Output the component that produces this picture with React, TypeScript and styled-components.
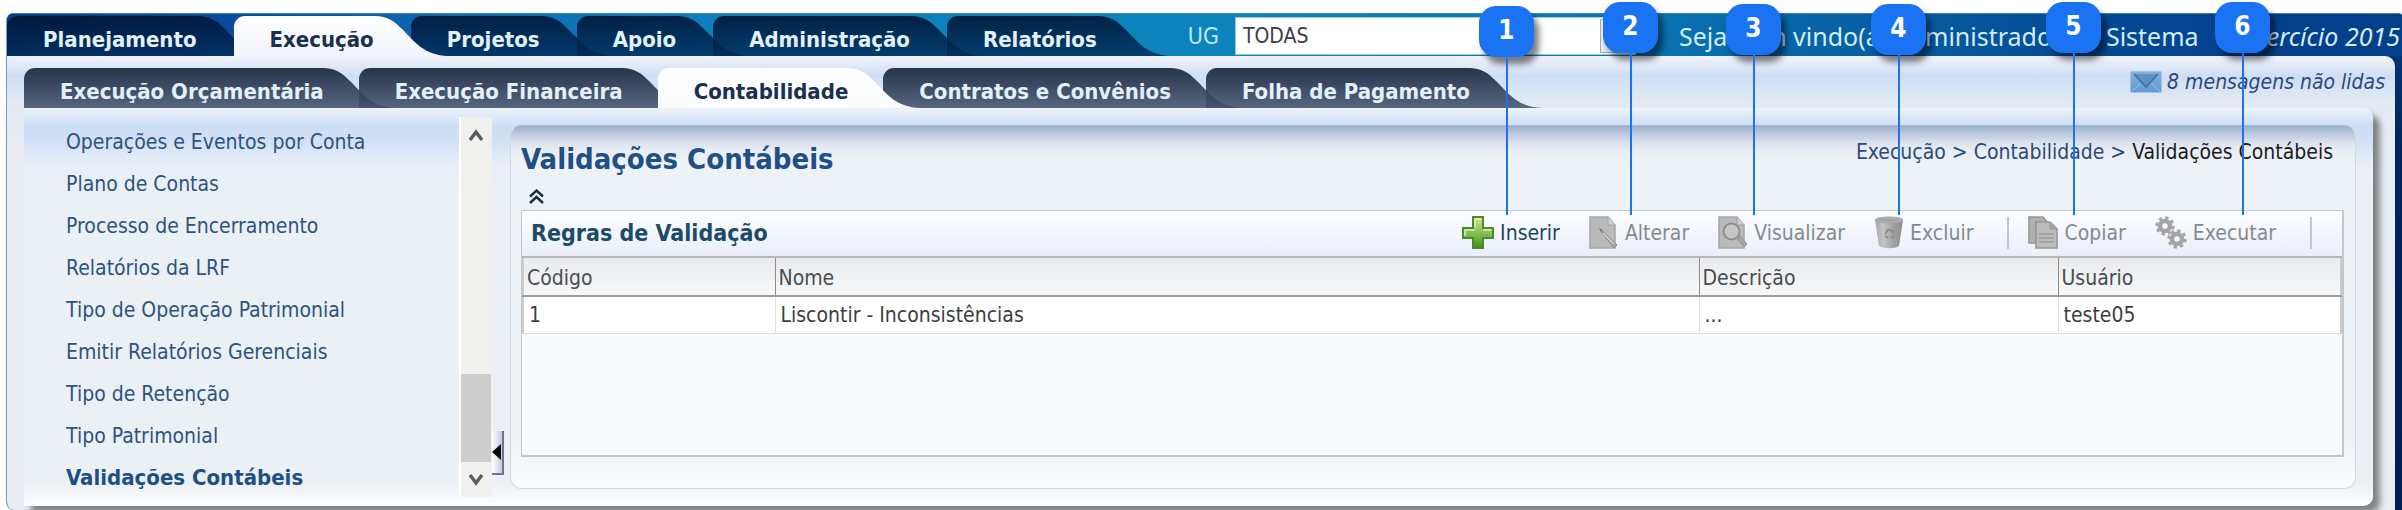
import React from "react";
import styled, { createGlobalStyle, css } from "styled-components";

const GlobalStyle = createGlobalStyle`
  *, *::before, *::after { box-sizing: border-box; }
  body {
    margin: 0;
    background: #fff;
    font-family: "DejaVu Sans Condensed", "Noto Sans", sans-serif;
    font-size: 21px;
    line-height: 30px;
    color: #3c3f45;
    overflow-x: hidden;
  }
  a { color: inherit; text-decoration: none; }
  ul, ol, h1, h2 { margin: 0; padding: 0; list-style: none; }
  button, select { font: inherit; color: inherit; border: 0; background: none; padding: 0; margin: 0; }
`;

/* ---------- frame ---------- */

const Page = styled.div`
  position: relative;
  padding: 13px 0 0 6px;
`;

const Frame = styled.div`
  border-left: 1px solid #6d9bd0;
  border-radius: 8px 4px 0 8px;
  overflow: hidden;
  background: linear-gradient(180deg, #023a80 0, #00265c 130px, #001f54 100%);
`;

const Header = styled.header`
  display: flex;
  align-items: flex-end;
  height: 43px;
  border-top: 1px solid #3f7fb4;
  background: linear-gradient(90deg, #073a86 0%, #0a4a9c 9%, #0c68b0 18%, #0d80c0 30%, #0b84bd 50%, #0a78b4 66%, #0763a6 76%, #05509a 84%, #043f8c 94%, #03408a 100%);
`;

const Body = styled.div`
  margin-right: 7px;
  border-radius: 0 10px 0 0;
  background: linear-gradient(180deg, #f1f4fc 0, #e3ebf8 8px, #cfdef4 20px, #dce6f4 38px, #e6ecf5 56px, #e9eef4 110px);
  padding-bottom: 4px;
`;

/* ---------- tabs ---------- */

const TabList = styled.ul`
  display: flex;
  height: 40px;
  font-weight: 700;
  font-size: 22px;
`;

const TabItem = styled.li<{ $active?: boolean; $kind: "main" | "sub" }>`
  position: relative;
  isolation: isolate;
  z-index: ${p => (p.$active ? 1 : 0)};
  padding: 9px ${p => (p.$kind === "main" ? 37 : 35)}px 0 36px;
  white-space: nowrap;
  color: ${p => (p.$active ? "#1b2f50" : "#e2f0f7")};
`;

type Look = { top: string; bottom: string };

const TabBody = styled.span<{ $look: Look }>`
  position: absolute;
  inset: 0 36px 0 0;
  z-index: -1;
  border-radius: 11px 0 0 0;
  background: linear-gradient(180deg, ${p => p.$look.top}, ${p => p.$look.bottom});
`;

const TabSlope = styled.svg`
  position: absolute;
  top: 0;
  right: -37px;
  width: 73px;
  height: 40px;
  z-index: -1;
`;

const looks: Record<string, Look> = {
  main: { top: "rgba(0,20,52,0.88)", bottom: "rgba(0,42,86,0.78)" },
  mainActive: { top: "#ffffff", bottom: "#f1f4fc" },
  sub: { top: "rgba(33,48,70,0.97)", bottom: "rgba(64,80,108,0.86)" },
  subActive: { top: "#ffffff", bottom: "#fbfcff" },
};

function Tab({ label, active, kind }: { label: string; active?: boolean; kind: "main" | "sub" }) {
  const key = active ? kind + "Active" : kind;
  const look = looks[key];
  return (
    <TabItem $active={active} $kind={kind}>
      <TabBody $look={look} />
      <TabSlope viewBox="0 0 73 40" aria-hidden="true">
        <defs>
          <linearGradient id={"slope-" + key} x1="0" y1="0" x2="0" y2="1">
            <stop offset="0" stopColor={look.top} />
            <stop offset="1" stopColor={look.bottom} />
          </linearGradient>
        </defs>
        <path d="M0 0C12 0 19 5 27 13C41 27 49 39 73 40H0Z" fill={`url(#slope-${key})`} />
      </TabSlope>
      <a href="#" aria-current={active ? "page" : undefined}>{label}</a>
    </TabItem>
  );
}

/* ---------- header right side ---------- */

const HeaderText = styled.span`
  font-family: "Noto Sans", sans-serif;
  font-size: 25px;
  line-height: 38px;
  height: 42px;
  padding-top: 3px;
  color: #d3ecf7;
  white-space: nowrap;
`;

const UnitLabel = styled.label`
  font-size: 23px;
  line-height: 40px;
  color: #bfe6f6;
  margin-left: 54px;
`;

const UnitSelectBox = styled.div`
  position: relative;
  width: 401px;
  height: 38px;
  margin: 0 43px 1px 16px;
  background: #fff;
  border: 1px solid #9ccbe4;
`;

const UnitSelect = styled.select`
  appearance: none;
  width: 100%;
  height: 100%;
  padding: 0 42px 0 7px;
  color: #3c3f45;
`;

const SelectArrow = styled.svg`
  position: absolute;
  right: 1px;
  top: 1px;
  width: 34px;
  height: 34px;
  background: #e9ebee;
  border: 1px solid #a9adb3;
  pointer-events: none;
`;

const Exercise = styled(HeaderText)`
  font-style: italic;
  margin-left: auto;
  padding-right: 2px;
`;

/* ---------- sub bar ---------- */

const SubBar = styled.div`
  display: flex;
  justify-content: space-between;
  padding: 12px 10px 0 17px;
`;

const Messages = styled.a`
  display: flex;
  align-items: center;
  gap: 5px;
  height: 28px;
  font-style: italic;
  color: #2c4a7c;
`;

/* ---------- content ---------- */

const Content = styled.div`
  display: flex;
  margin: 0 22px 0 17px;
  border-radius: 0 10px 10px 0;
  box-shadow: 7px 7px 6px #808285;
  background: linear-gradient(180deg, #edf3fb 0, #dfeaf7 8px, #cbdcf4 18px, #d3e1f5 34px, #e9eff7 58px, #ebf0f5 90px, #ebf0f4 calc(100% - 24px), #fdfeff 100%);
`;

const SideMenu = styled.ul`
  width: 435px;
  padding: 13px 0 7px 42px;
`;

const SideItem = styled.li<{ $current?: boolean }>`
  line-height: 42px;
  color: #2b5480;
  ${p => p.$current && css`
    font-weight: 700;
    font-size: 22px;
    color: #1d4f86;
  `}
`;

const ScrollBar = styled.div`
  display: flex;
  flex-direction: column;
  width: 33px;
  margin: 9px 0;
  padding-right: 1px;
  border-left: 2px solid #fff;
  background: #f0f0ef;
`;

const ScrollButton = styled.button`
  display: grid;
  place-items: center;
  height: 35px;
`;

const ScrollTrack = styled.div`
  flex: 1;
  display: flex;
  flex-direction: column;
  justify-content: flex-end;
`;

const ScrollThumb = styled.div`
  height: 88px;
  background: #cdcdcd;
`;

const CollapseHandle = styled.button`
  align-self: flex-end;
  display: grid;
  place-items: center start;
  width: 12px;
  height: 44px;
  margin: 0 6px 31px 0;
  background: linear-gradient(90deg, #fff, #c3cddd);
  border-right: 2px solid #6b7689;
  border-bottom: 2px solid #6b7689;
`;

const Panel = styled.main`
  flex: 1;
  min-width: 0;
  display: flex;
  flex-direction: column;
  margin: 17px 17px 17px 0;
  padding: 0 11px 31px 10px;
  border: 1px solid #d2d9e1;
  border-top-color: #a9b8d0;
  border-radius: 12px;
  background: linear-gradient(180deg, #a0b1cc 0, #b9c6da 7px, #d9e1ec 16px, #e8edf4 24px, #edf2f6 38px, #edf2f6 calc(100% - 48px), #fcfdff 100%);
`;

const PanelHead = styled.div`
  display: flex;
  justify-content: space-between;
  height: 57px;
  padding: 10px 11px 0 0;
`;

const Title = styled.h1`
  padding-top: 6px;
  font-size: 29px;
  line-height: 34px;
  color: #1f4f86;
`;

const Crumbs = styled.nav`
  line-height: 32px;
  white-space: pre;
  color: #2c4a7c;
`;

const CrumbCurrent = styled.span`
  color: #1a1c22;
`;

const ToggleRow = styled.div`
  display: flex;
  align-items: center;
  height: 27px;
  padding-left: 8px;
`;

const IconButton = styled.button`
  display: flex;
`;

/* ---------- grid ---------- */

const Grid = styled.section`
  flex: 1;
  border: 1px solid #c3c6ca;
  border-right-width: 2px;
  border-bottom: 2px solid #c3c4c7;
  background: #f8f9fb;
`;

const GridBar = styled.div`
  display: flex;
  align-items: center;
  justify-content: space-between;
  height: 47px;
  padding: 0 30px 2px 9px;
  background: linear-gradient(180deg, #fdfeff, #e9eef9);
  border-bottom: 2px solid #b5b7ba;
`;

const GridTitle = styled.h2`
  font-size: 23px;
  line-height: 30px;
  color: #1d4a66;
`;

const Toolbar = styled.div`
  display: flex;
  align-items: center;
`;

const ToolButton = styled.button`
  display: flex;
  align-items: center;
  gap: 6px;
  margin-left: 29px;
  color: #1d4560;
  &:disabled { color: #85898f; }
`;

const ToolSeparator = styled.span`
  width: 2px;
  height: 32px;
  margin: 0 -10px 0 34px;
  background: #c3c6cb;
  &:last-child { margin-right: 0; }
`;

const Table = styled.table`
  width: 100%;
  table-layout: fixed;
  border-collapse: collapse;
  border-left: 2px solid #c9cbcd;
  border-right: 2px solid #c9cbcd;
  line-height: 30px;
`;

const Col = styled.col<{ $width?: number }>`
  ${p => p.$width && css`width: ${p.$width}px;`}
`;

const HeadCell = styled.th`
  height: 38px;
  padding: 4px 0 2px 3px;
  text-align: left;
  font-weight: 400;
  color: #4a4c50;
  background: linear-gradient(180deg, #e8eaec, #f7f8fa);
  border-bottom: 2px solid #9a9c9f;
  & + & { border-left: 1px solid #8a8c90; }
`;

const Cell = styled.td`
  height: 37px;
  padding: 3px 0 3px 5px;
  color: #3c3e42;
  background: #fff;
  border-bottom: 1px solid #dcdee1;
  & + & { border-left: 1px solid #dfe1e4; }
`;

/* ---------- numbered callouts ---------- */

const Callout = styled.div<{ $right: number; $top: number }>`
  position: absolute;
  z-index: 5;
  right: ${p => p.$right}px;
  top: ${p => p.$top}px;
  width: 55px;
  height: ${p => 215 - p.$top}px;
  display: flex;
  flex-direction: column;
  align-items: center;
  pointer-events: none;
  &::after {
    content: "";
    flex: 1;
    width: 2px;
    background: #1a73f2;
  }
`;

const CalloutBadge = styled.span`
  width: 55px;
  height: 51px;
  border-radius: 17px;
  background: #1a73f2;
  box-shadow: 5px 7px 6px rgba(0, 0, 0, 0.5);
  color: #fff;
  font-size: 26px;
  font-weight: 700;
  line-height: 49px;
  text-align: center;
`;

/* ---------- icons ---------- */

const MailIcon = () => (
  <svg width="32" height="22" viewBox="0 0 32 22" aria-hidden="true">
    <defs>
      <linearGradient id="mail" x1="0" y1="0" x2="0" y2="1">
        <stop offset="0" stopColor="#86b0dc" /><stop offset="1" stopColor="#5f9ad2" />
      </linearGradient>
    </defs>
    <rect x="0.5" y="0.5" width="31" height="21" rx="1" fill="url(#mail)" stroke="#a4c3e4" />
    <path d="M1 21L12 11M31 21L20 11" stroke="#83b1de" strokeWidth="1.5" />
    <path d="M4 3L16 16L28 3Z" fill="#5c92c8" />
    <path d="M4 3L16 16L28 3" fill="none" stroke="#3b6ea8" strokeWidth="1.6" />
  </svg>
);

const Chevron = ({ down }: { down?: boolean }) => (
  <svg width="16" height="14" viewBox="0 0 16 14" aria-hidden="true">
    <path d={down ? "M2 2L8 10L14 2" : "M2 12L8 4L14 12"} fill="none" stroke="#5b5b5b" strokeWidth="3.4" />
  </svg>
);

const DoubleUp = () => (
  <svg width="15" height="15" viewBox="0 0 15 15" aria-hidden="true">
    <path d="M1 7.5L7.5 1.5L14 7.5M1 14L7.5 8L14 14" fill="none" stroke="#1d2c4c" strokeWidth="2.4" />
  </svg>
);

const PlusIcon = () => (
  <svg width="32" height="33" viewBox="0 0 32 33" aria-hidden="true">
    <defs>
      <linearGradient id="plus" x1="0" y1="0" x2="0" y2="1">
        <stop offset="0" stopColor="#c9e39a" /><stop offset="0.5" stopColor="#86c255" /><stop offset="1" stopColor="#3f9414" />
      </linearGradient>
    </defs>
    <path d="M11 1H21V12H31V22H21V32H11V22H1V12H11Z" fill="url(#plus)" stroke="#4d8a2c" strokeWidth="2" />
    <path d="M13 12V3H19M3 20V14H13M21 14H29" fill="none" stroke="#dff0bf" strokeWidth="1.4" />
  </svg>
);

const EditIcon = () => (
  <svg width="30" height="33" viewBox="0 0 30 33" aria-hidden="true">
    <path d="M1 1H19L26 9V32H1Z" fill="#bababa" stroke="#a8a8a8" strokeWidth="1.6" />
    <path d="M19 1V9H26" fill="#cfcfcf" stroke="#a0a0a0" />
    <path d="M11 13L14 15L28 29L25 32L13 17Z" fill="#a2a2a2" stroke="#8f8f8f" />
    <path d="M10 12L13 14L12 16Z" fill="#6f6f6f" />
    <path d="M14 17L25 28" stroke="#d2d2d2" strokeWidth="1.4" />
  </svg>
);

const ViewIcon = () => (
  <svg width="30" height="33" viewBox="0 0 30 33" aria-hidden="true">
    <path d="M1 1H19L26 9V32H1Z" fill="#bababa" stroke="#a8a8a8" strokeWidth="1.6" />
    <path d="M19 1V9H26" fill="#cfcfcf" stroke="#a0a0a0" />
    <circle cx="13.5" cy="15.5" r="8" fill="#c6c6c6" stroke="#8f8f8f" strokeWidth="2" />
    <path d="M19 22L22 20L29 28L26 31Z" fill="#a4a4a4" stroke="#939393" />
  </svg>
);

const TrashIcon = () => (
  <svg width="30" height="33" viewBox="0 0 30 33" aria-hidden="true">
    <defs>
      <linearGradient id="bin" x1="0" y1="0" x2="1" y2="0">
        <stop offset="0" stopColor="#a9a9a9" /><stop offset="0.3" stopColor="#c4c4c4" /><stop offset="0.65" stopColor="#a0a0a0" /><stop offset="1" stopColor="#8f8f8f" />
      </linearGradient>
    </defs>
    <path d="M1 4L5 30C9 33 21 33 25 30L29 4Z" fill="url(#bin)" />
    <ellipse cx="15" cy="4" rx="14" ry="3" fill="#b3b3b3" stroke="#a3a3a3" />
    <ellipse cx="15" cy="4" rx="11" ry="1.4" fill="#a2a2a2" />
    <path d="M11 18L14 14H17L20 17M20 20L17 22M11 20L14 22" fill="none" stroke="#8c8c8c" strokeWidth="2" />
  </svg>
);

const CopyIcon = () => (
  <svg width="30" height="33" viewBox="0 0 30 33" aria-hidden="true">
    <path d="M1 1H15L20 7V27H1Z" fill="#b0b0b0" stroke="#989898" strokeWidth="1.6" />
    <path d="M8 6H22L29 13V32H8Z" fill="#bcbcbc" stroke="#959595" strokeWidth="1.6" />
    <path d="M22 6V13H29" fill="#a5a5a5" stroke="#959595" />
    <path d="M11 18H26M11 22H26M11 26H26" stroke="#9b9b9b" strokeWidth="1.5" />
  </svg>
);

const Gear = ({ x, y }: { x: number; y: number }) => (
  <g transform={`translate(${x} ${y})`}>
    <circle r="5" fill="none" stroke="#a5a5a5" strokeWidth="4.6" />
    <circle r="8" fill="none" stroke="#a5a5a5" strokeWidth="3.4" strokeDasharray="3.2 3.08" />
  </g>
);

const GearsIcon = () => (
  <svg width="32" height="33" viewBox="0 0 32 33" aria-hidden="true">
    <Gear x={10} y={10} />
    <Gear x={22} y={23} />
  </svg>
);

/* ---------- data ---------- */

const mainTabs = ["Planejamento", "Execução", "Projetos", "Apoio", "Administração", "Relatórios"];
const subTabs = ["Execução Orçamentária", "Execução Financeira", "Contabilidade", "Contratos e Convênios", "Folha de Pagamento"];
const menu = [
  "Operações e Eventos por Conta",
  "Plano de Contas",
  "Processo de Encerramento",
  "Relatórios da LRF",
  "Tipo de Operação Patrimonial",
  "Emitir Relatórios Gerenciais",
  "Tipo de Retenção",
  "Tipo Patrimonial",
  "Validações Contábeis",
];
const callouts = [
  { right: 868, top: 6 },
  { right: 744, top: 2 },
  { right: 621, top: 4 },
  { right: 476, top: 4 },
  { right: 301, top: 2 },
  { right: 132, top: 2 },
];

export default function App() {
  return (
    <Page>
      <GlobalStyle />
      <Frame>
        <Header>
          <TabList>
            {mainTabs.map(t => <Tab key={t} label={t} kind="main" active={t === "Execução"} />)}
          </TabList>
          <UnitLabel htmlFor="ug">UG</UnitLabel>
          <UnitSelectBox>
            <UnitSelect id="ug" defaultValue="TODAS">
              <option>TODAS</option>
            </UnitSelect>
            <SelectArrow viewBox="0 0 34 34" aria-hidden="true">
              <path d="M12 14L17 20L22 14" fill="none" stroke="#555" strokeWidth="3" />
            </SelectArrow>
          </UnitSelectBox>
          <HeaderText>Seja bem vindo(a) Administrador do Sistema</HeaderText>
          <Exercise>Exercício 2015</Exercise>
        </Header>
        <Body>
          <SubBar>
            <TabList>
              {subTabs.map(t => <Tab key={t} label={t} kind="sub" active={t === "Contabilidade"} />)}
            </TabList>
            <Messages href="#"><MailIcon />8 mensagens não lidas</Messages>
          </SubBar>
          <Content>
            <SideMenu>
              {menu.map((m, i) => (
                <SideItem key={m} $current={i === menu.length - 1}><a href="#">{m}</a></SideItem>
              ))}
            </SideMenu>
            <ScrollBar>
              <ScrollButton aria-label="Rolar para cima"><Chevron /></ScrollButton>
              <ScrollTrack><ScrollThumb /></ScrollTrack>
              <ScrollButton aria-label="Rolar para baixo"><Chevron down /></ScrollButton>
            </ScrollBar>
            <CollapseHandle aria-label="Recolher menu">
              <svg width="9" height="16" viewBox="0 0 9 16" aria-hidden="true"><path d="M0 8L9 0V16Z" fill="#0a0a0a" /></svg>
            </CollapseHandle>
            <Panel>
              <PanelHead>
                <Title>Validações Contábeis</Title>
                <Crumbs>
                  <a href="#">Execução</a>{" > "}<a href="#">Contabilidade</a>{" > "}<CrumbCurrent>Validações Contábeis</CrumbCurrent>
                </Crumbs>
              </PanelHead>
              <ToggleRow>
                <IconButton aria-label="Recolher"><DoubleUp /></IconButton>
              </ToggleRow>
              <Grid>
                <GridBar>
                  <GridTitle>Regras de Validação</GridTitle>
                  <Toolbar>
                    <ToolButton><PlusIcon />Inserir</ToolButton>
                    <ToolButton disabled><EditIcon />Alterar</ToolButton>
                    <ToolButton disabled><ViewIcon />Visualizar</ToolButton>
                    <ToolButton disabled><TrashIcon />Excluir</ToolButton>
                    <ToolSeparator />
                    <ToolButton disabled><CopyIcon />Copiar</ToolButton>
                    <ToolButton disabled><GearsIcon />Executar</ToolButton>
                    <ToolSeparator />
                  </Toolbar>
                </GridBar>
                <Table>
                  <colgroup>
                    <Col $width={252} />
                    <Col />
                    <Col $width={359} />
                    <Col $width={283} />
                  </colgroup>
                  <thead>
                    <tr>
                      <HeadCell>Código</HeadCell>
                      <HeadCell>Nome</HeadCell>
                      <HeadCell>Descrição</HeadCell>
                      <HeadCell>Usuário</HeadCell>
                    </tr>
                  </thead>
                  <tbody>
                    <tr>
                      <Cell>1</Cell>
                      <Cell>Liscontir - Inconsistências</Cell>
                      <Cell>...</Cell>
                      <Cell>teste05</Cell>
                    </tr>
                  </tbody>
                </Table>
              </Grid>
            </Panel>
          </Content>
        </Body>
      </Frame>
      {callouts.map((c, i) => (
        <Callout key={i} $right={c.right} $top={c.top}><CalloutBadge>{i + 1}</CalloutBadge></Callout>
      ))}
    </Page>
  );
}
